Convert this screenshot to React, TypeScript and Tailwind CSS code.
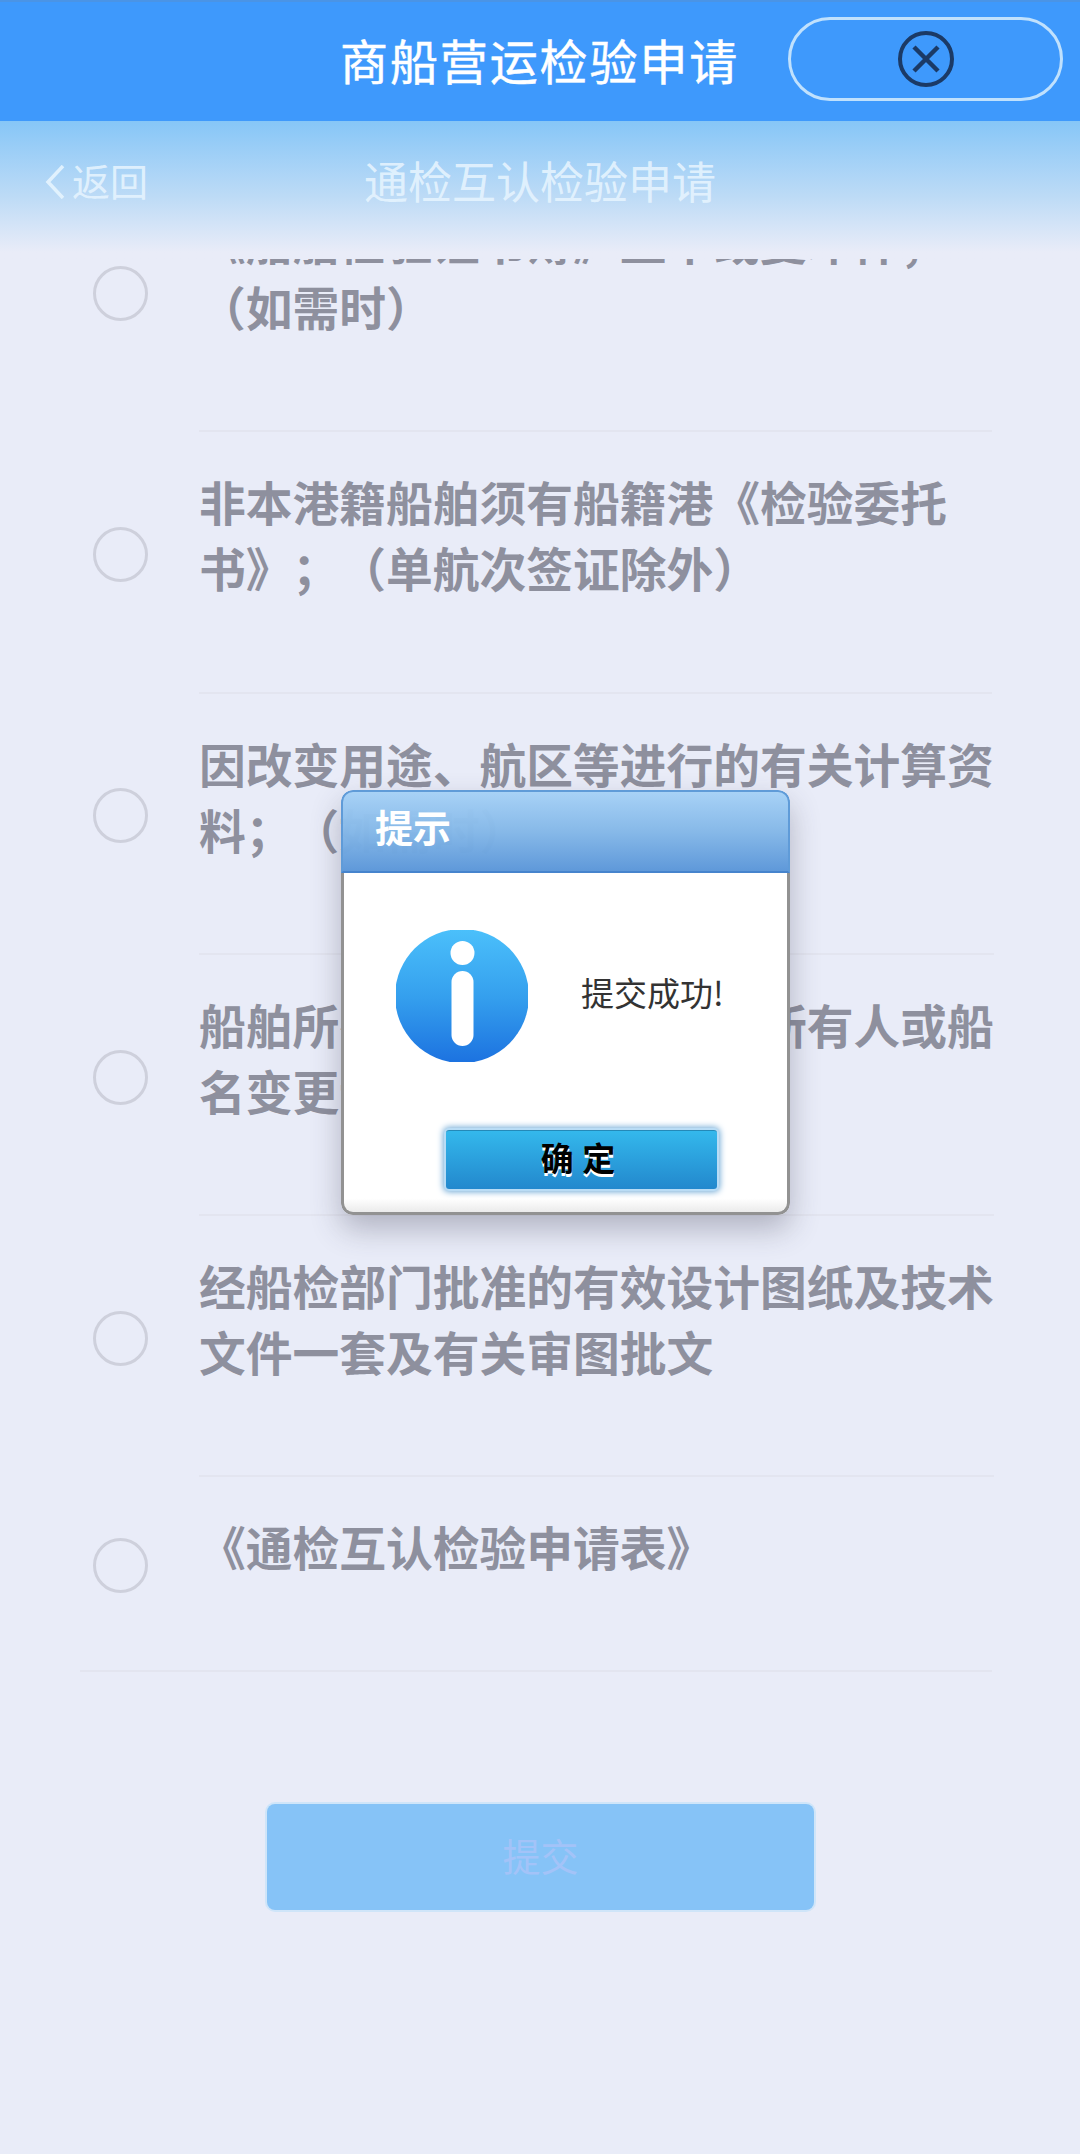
import React, { useState } from 'react'

interface Material {
  id: number
  lines: string[]
}

const MATERIALS: Material[] = [
  { id: 1, lines: ['《船舶检验证书簿》正本或复印件；', '（如需时）'] },
  { id: 2, lines: ['非本港籍船舶须有船籍港《检验委托', '书》；（单航次签证除外）'] },
  { id: 3, lines: ['因改变用途、航区等进行的有关计算资', '料；（如需时）'] },
  { id: 4, lines: ['船舶所有人变更时应有原船所有人或船', '名变更证明'] },
  { id: 5, lines: ['经船检部门批准的有效设计图纸及技术', '文件一套及有关审图批文'] },
  { id: 6, lines: ['《通检互认检验申请表》'] },
]

function TitleBar() {
  return (
    <header className="flex h-[121px] shrink-0 items-center justify-between border-t-2 border-[#4a94e6] bg-[#3e99fc] pr-[17px] pl-[340px]">
      <h1 className="mb-[6px] text-[48px] leading-[60px] tracking-[1.9px] whitespace-nowrap text-white [-webkit-text-stroke:0.5px_#fff]">
        商船营运检验申请
      </h1>
      <button className="mb-[6px] flex h-[84px] w-[275px] items-center justify-center rounded-full border-[3px] border-[#c0e1fd]">
        <svg className="h-[58px] w-[58px]" viewBox="0 0 58 58" fill="none" stroke="#1b3a66">
          <circle cx="29" cy="29" r="26" strokeWidth="4" />
          <path d="M17 17l24 24M41 17l-24 24" strokeWidth="4.5" />
        </svg>
      </button>
    </header>
  )
}

function NavBar() {
  return (
    <nav className="grid h-[138px] shrink-0 grid-cols-3 items-center bg-linear-to-b from-[#86c6f7] from-0% via-[#bddbf6] via-55% to-[#e9ecf8] to-95% pb-[20px] text-[#e6f4fe]/90">
      <button className="flex items-center gap-[7px] pl-[45px]">
        <svg className="mt-[3px] h-[34px] w-[20px]" viewBox="0 0 20 34" fill="none" stroke="currentColor" strokeWidth="3.5">
          <path d="M18 1L3 17l15 16" />
        </svg>
        <span className="text-[38px] leading-[48px]">返回</span>
      </button>
      <h2 className="text-center text-[44px] leading-[56px] whitespace-nowrap">通检互认检验申请</h2>
    </nav>
  )
}

function SuccessDialog({ onClose }: { onClose: () => void }) {
  return (
    <div className="absolute top-[790px] left-[341px] h-[425px] w-[449px] rounded-xl shadow-[0_14px_30px_rgba(60,60,80,0.32)]">
      <div className="flex h-full flex-col overflow-hidden rounded-xl">
        <div className="flex h-[83px] shrink-0 items-center rounded-t-xl border-2 border-[#5f9bd8] border-b-[#4684cd] bg-linear-to-b from-[#a6d1f6]/98 via-[#85b8e8]/98 to-[#5c97d9]/98 pb-[12px] pl-[32px]">
          <span className="text-[38px] leading-[50px] font-bold text-white">提示</span>
        </div>
        <div className="flex flex-1 flex-col rounded-b-xl border-x-[3px] border-b-[3px] border-[#929292] bg-linear-to-b from-white from-96% to-[#ebebeb]">
          <div className="flex items-center pt-[57px] pl-[52px]">
            <svg className="h-[132px] w-[132px]" viewBox="0 0 132 132">
              <defs>
                <linearGradient id="info" x1="0" y1="0" x2="0" y2="1">
                  <stop offset="0" stopColor="#4bc0fb" />
                  <stop offset="0.5" stopColor="#35a0ee" />
                  <stop offset="1" stopColor="#1c72e0" />
                </linearGradient>
              </defs>
              <circle cx="66" cy="66" r="67" fill="url(#info)" />
              <circle cx="66.5" cy="23" r="12" fill="#fff" />
              <rect x="55.5" y="41" width="22" height="75" rx="11" fill="#fff" />
            </svg>
            <p className="pb-[8px] pl-[53px] text-[33px] leading-[44px] whitespace-nowrap text-[#333]">提交成功!</p>
          </div>
          <button
            onClick={onClose}
            className="mt-[68px] ml-[102px] h-[59px] w-[271px] rounded-[3px] border-t border-[#2489b8] bg-linear-to-b from-[#34b8ec] to-[#2388cd] pr-[7px] pb-[6px] text-[33px] leading-[48px] font-bold [word-spacing:1px] text-black shadow-[0_0_0_2px_#b9dcf5,0_0_6px_3px_#6fa9d6] [text-shadow:0_3px_0_#fff]"
          >
            确 定
          </button>
        </div>
      </div>
    </div>
  )
}

export default function App() {
  const [open, setOpen] = useState(true)
  const [checked, setChecked] = useState<number[]>([])

  const toggle = (id: number) =>
    setChecked(prev => (prev.includes(id) ? prev.filter(c => c !== id) : [...prev, id]))

  return (
    <div className="relative flex h-[2154px] w-[1080px] flex-col overflow-hidden bg-[#e9ecf8] font-['Noto_Sans_CJK_SC',sans-serif] [text-spacing-trim:space-all]">
      <TitleBar />
      <NavBar />

      {/* Scrolled list, first row is partly under the nav */}
      <main className="flex flex-1 flex-col overflow-hidden">
        <ul className="-mt-[88px] shrink-0">
          {MATERIALS.map((m, i) => (
            <li
              key={m.id}
              className={i === MATERIALS.length - 1 ? 'mr-[88px] ml-[80px] flex border-b-2 border-[#e3e5f0]' : 'mr-[80px] ml-[80px] flex'}
            >
              <button
                onClick={() => toggle(m.id)}
                className={[
                  'mt-[-17px] mr-[51px] ml-[13px] h-[55px] w-[55px] shrink-0 self-center rounded-full border-[3px] border-[#ced0dc]',
                  checked.includes(m.id) ? 'bg-[#86c3f7]' : '',
                ].join(' ')}
              />
              <div
                className={
                  i === MATERIALS.length - 1
                    ? 'h-[193px] pt-[36px]'
                    : 'mr-[8px] h-[261.3px] flex-1 border-b-2 border-[#e3e5f0] pt-[36px]'
                }
              >
                {m.lines.map(line => (
                  <p key={line} className="text-[46.75px] leading-[66px] font-bold whitespace-nowrap text-[#8e909e]">
                    {line}
                  </p>
                ))}
              </div>
            </li>
          ))}
        </ul>
        <button className="mt-[132px] ml-[267px] h-[106px] w-[547px] shrink-0 rounded-lg bg-[#86c3f7] pb-[4px] text-[38px] leading-[102px] text-[#a3c3f8] shadow-[0_0_0_2px_#cfe5f9]">
          提交
        </button>
      </main>

      {open && <SuccessDialog onClose={() => setOpen(false)} />}
    </div>
  )
}
